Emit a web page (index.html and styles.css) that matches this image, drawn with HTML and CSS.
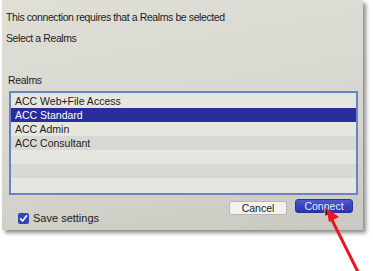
FILE: index.html
```html
<!DOCTYPE html>
<html lang="en">
<head>
    <meta charset="UTF-8">
    <title>Select a Realms</title>
    <link rel="stylesheet" href="styles.css">
</head>
<body>
    <div class="dialog">
        <p class="msg">This connection requires that a Realms be selected</p>
        <p class="msg">Select a Realms</p>

        <div class="label">Realms</div>
        <ul class="realms">
            <li>ACC Web+File Access</li>
            <li class="selected">ACC Standard</li>
            <li>ACC Admin</li>
            <li>ACC Consultant</li>
            <li></li>
            <li></li>
            <li></li>
        </ul>

        <div class="footer">
            <label class="save">
                <span class="check">
                    <svg width="9" height="9" viewBox="0 0 9 9"><path d="M1.5 4.8 L3.6 7 L7.6 1.8" fill="none" stroke="#fff" stroke-width="1.6" stroke-linecap="round" stroke-linejoin="round"/></svg>
                </span>
                Save settings
            </label>
            <div class="buttons">
                <button class="btn">Cancel</button>
                <button class="btn primary">Connect</button>
            </div>
        </div>
    </div>

    <!-- pointeur de la souris -->
    <svg class="cursor" width="10" height="14" viewBox="0 0 10 14">
        <path d="M1 1 L1 11 L3.5 8.5 L5.5 13 L7 12.3 L5 8 L8.5 8 Z" fill="#111" stroke="#ddd" stroke-width="0.8"/>
    </svg>

    <!-- fleche rouge -->
    <svg class="arrow" width="50" height="70" viewBox="0 0 50 70">
        <line x1="40" y1="68" x2="13" y2="14" stroke="#f0141e" stroke-width="3"/>
        <path d="M8 4 L21 13 L11 18 Z" fill="#f0141e"/>
    </svg>
</body>
</html>
```

FILE: styles.css
```css
body {
    margin: 0;
    background-color: #fff;
    font-family: 'Liberation Sans', Arial, sans-serif;
    color: #1c1c1c;
    position: relative;
    width: 373px;
    height: 271px;
    overflow: hidden;
}

.dialog {
    width: 353px;
    height: 213px;
    margin-left: 2px;
    padding: 11px 4px 6px 4px;
    background: linear-gradient(170deg, #dfdfd8 0%, #d6d6ce 60%, #c9c9c1 100%);
    box-shadow: 3px 3px 4px rgba(0, 0, 0, 0.45);
    display: flex;
    flex-direction: column;
}

.msg {
    margin: 0 0 8px 0;
    font-size: 10.5px;
    line-height: 13px;
    letter-spacing: -0.4px;
}

.label {
    margin: 21px 0 4px 2px;
    font-size: 10.5px;
    line-height: 13px;
    letter-spacing: -0.3px;
}

.realms {
    list-style: none;
    margin: 0 1px 0 3px;
    padding: 1px 0;
    border: 2px solid #6a83c6;
    background-color: #e4e4de;
}

.realms li {
    height: 14px;
    line-height: 14px;
    padding-left: 4px;
    font-size: 10.5px;
    background-color: #e6e6e0;
}

.realms li:nth-child(even) {
    background-color: #d9d9d3;
}

.realms li.selected {
    background-color: #2a2d9c;
    color: #fff;
}

.footer {
    display: flex;
    justify-content: space-between;
    align-items: flex-start;
    margin-top: 6px;
    padding: 0 6px 0 12px;
}

.save {
    display: flex;
    align-items: center;
    gap: 4px;
    margin-top: 11px;
    font-size: 11px;
}

.check {
    width: 11px;
    height: 11px;
    border-radius: 2px;
    background-color: #3048b0;
    display: flex;
    align-items: center;
    justify-content: center;
}

.buttons {
    display: flex;
    gap: 8px;
}

.btn {
    width: 58px;
    height: 14px;
    padding: 0;
    border: 1px solid #b8b8b2;
    border-radius: 3px;
    background-color: #f2f2ee;
    font-family: 'Liberation Sans', Arial, sans-serif;
    font-size: 10.5px;
    line-height: 12px;
    color: #222;
}

.primary {
    margin-top: -2px;
    border-color: #2a32a0;
    background: linear-gradient(#4a5ad0, #2a34b0);
    color: #e8e8ff;
}

.cursor {
    position: absolute;
    left: 324px;
    top: 206px;
}

.arrow {
    position: absolute;
    left: 318px;
    top: 204px;
}
```
